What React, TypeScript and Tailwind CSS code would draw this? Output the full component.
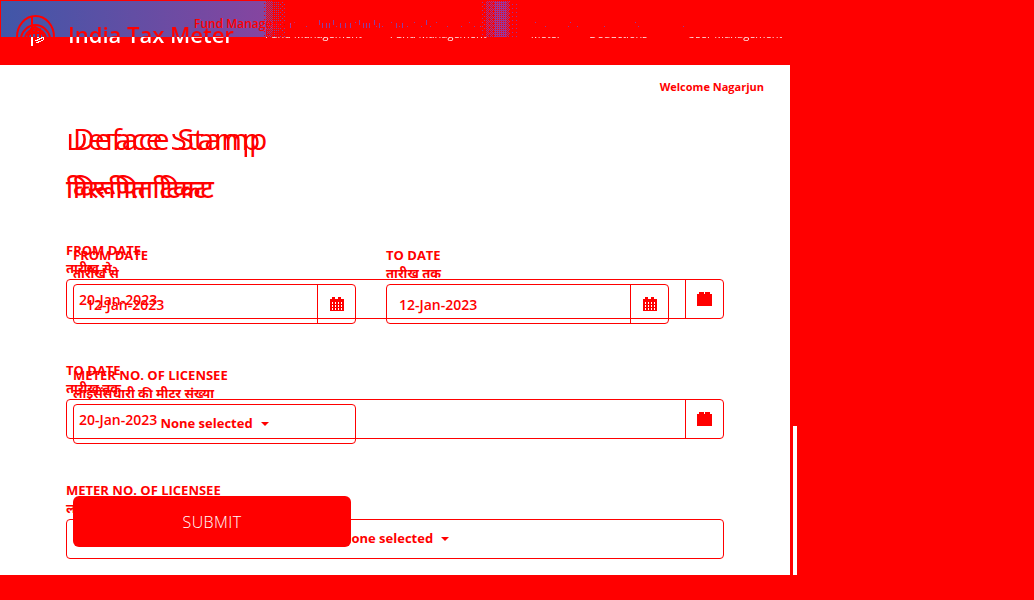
import React, { useId } from "react";

const clipText = "bg-clip-text text-transparent";
const waterline = "bg-[linear-gradient(#ff0000_37px,#ffffff_37px)] " + clipText;

const BAYER = [
  [0, 8, 2, 10],
  [12, 4, 14, 6],
  [3, 11, 1, 9],
  [15, 7, 13, 5],
];

function dither(x0: number, x1: number, density: (x: number) => number) {
  let d = "";
  for (let x = x0; x < x1; x++) {
    for (let y = 1; y < 37; y++) {
      if (BAYER[y % 4][x % 4] / 16 < density(x)) d += `M${x} ${y}h1v1h-1z`;
    }
  }
  return d;
}

const bandEdge = dither(264, 285, (x) => (x < 267 ? 0.8 : x < 272 ? 0.5 : x < 280 ? 0.25 : 0.07));
const secondBand = dither(482, 518, (x) =>
  x < 486 ? 0.07 : x < 494 ? 0.42 : x < 506 ? 0.72 : x < 510 ? 0.4 : 0.05,
);

const tallMarks = [290, 319, 322, 326, 329, 333, 340, 345, 350, 359, 363, 366, 369, 374, 379, 396, 402, 426];
const smallMarks = [
  294, 306, 336, 355, 376, 382, 391, 399, 407, 414, 421, 430, 436, 447, 461, 469, 474, 480, 535, 545, 568, 570, 577,
  604, 635, 638, 683,
];
const letterMarks =
  tallMarks.map((x, i) => `M${x} ${i % 4 === 1 ? 20 : 23}h1v5h-1z`).join("") +
  smallMarks.map((x, i) => `M${x} ${i % 3 === 0 ? 22 : 26}h1v1h-1z`).join("");

function CalendarIcon({ solid = false }: { solid?: boolean }) {
  return (
    <svg viewBox="0 0 16 16" className="h-4 w-4" shapeRendering="crispEdges" aria-hidden="true">
      <path fill="#ff0000" d={solid ? "M0 3h2V1h5v2h1V1h5v2h2v12H0z" : "M1 3h2V1h3v2h3V1h3v2h3v12H1z"} />
      {!solid && (
        <path
          fill="#fff"
          d="M3 6h1v2H3zM6 6h1v2H6zM9 6h1v2H9zM12 6h1v2h-1zM3 9h1v2H3zM6 9h1v2H6zM9 9h1v2H9zM12 9h1v2h-1zM3 12h1v2H3zM6 12h1v2H6zM9 12h1v2H9zM12 12h1v2h-1z"
        />
      )}
    </svg>
  );
}

function Label({ id, en, hi }: { id: string; en: string; hi: string }) {
  return (
    <label htmlFor={id} className="block h-[38px] text-[13px] leading-[18px] font-bold whitespace-nowrap">
      <span className="block">{en}</span>
      <span className="block">{hi}</span>
    </label>
  );
}

function DateField({ en, hi, value, wide = false }: { en: string; hi: string; value: string; wide?: boolean }) {
  const id = useId();
  return (
    <div className="h-[120px]">
      <Label id={id} en={en} hi={hi} />
      <div className="flex h-10 rounded border border-[#ff0000]">
        <input
          id={id}
          defaultValue={value}
          className="min-w-0 flex-1 bg-transparent pt-0.5 pl-3 text-sm font-semibold outline-none"
        />
        <button
          type="button"
          aria-label="Open calendar"
          className="flex w-[38px] items-center justify-center border-l border-[#ff0000]"
        >
          <CalendarIcon solid={wide} />
        </button>
      </div>
    </div>
  );
}

function MeterField() {
  const id = useId();
  return (
    <div className="h-[120px]">
      <Label id={id} en="METER NO. OF LICENSEE" hi="लाइसेंसधारी की मीटर संख्या" />
      <button
        id={id}
        type="button"
        className="flex h-10 w-full items-center justify-center gap-2 rounded border border-[#ff0000] text-[13px] font-bold"
      >
        None selected
        <svg viewBox="0 0 8 4" className="h-1 w-2" aria-hidden="true">
          <path d="M0 0h8L4 4z" fill="#ff0000" />
        </svg>
      </button>
    </div>
  );
}

function Emblem() {
  return (
    <svg viewBox="0 0 40 40" className="h-10 w-10 shrink-0" aria-hidden="true">
      <g fill="none" stroke="#ff0000" strokeWidth="2">
        <path d="M1 23a18.500 21 0 0 1 37 0" />
        <path d="M5 23a15 16 0 0 1 29 0" />
        <path d="M9 23a11 11 0 0 1 21 0" />
        <path d="M12 23l3-8 4-2 5 3 4 7M16 2v21M13 19h13M20 23v-8M24 23v-7M11 21l14-6" />
      </g>
      <path
        d="M15 23h2v9h-2zM21 23h2v1h-2zM25 23h3v1h-2v1h-2v1h-2v1h-3v-1h2v-1h2v-1h2zM27 24h1v2h-1v1h-2v1h-2v1h-3v-1h2v-1h3v-1h2z"
        fill="#fff"
        shapeRendering="crispEdges"
      />
    </svg>
  );
}

export default function App() {
  return (
    <div className="min-h-screen overflow-hidden bg-[#ff0000] font-['Open_Sans','Noto_Sans',sans-serif] text-[#ff0000]">
      <header className="relative h-[65px]">
        <svg className="absolute top-0 left-0 h-10 w-full" shapeRendering="crispEdges" aria-hidden="true">
          <defs>
            <linearGradient id="sky">
              <stop offset="0" stopColor="#4057a8" />
              <stop offset="1" stopColor="#8545a0" />
            </linearGradient>
          </defs>
          <rect x="1" y="1" width="263" height="36" fill="url(#sky)" />
          <path d={bandEdge} fill="#8545a0" />
          <path d={secondBand} fill="#9a369c" />
          <path d={letterMarks} fill="#8e3fa0" />
        </svg>
        <div className="relative flex h-[65px] pl-4">
          <div className="pt-[14px]">
            <Emblem />
          </div>
          <p className={"ml-3 pt-[18px] text-[22px] leading-8 font-semibold whitespace-nowrap " + waterline}>
            India Tax Meter
          </p>
        </div>
        <a href="#funds" className="absolute top-[15px] left-[194px] text-xs leading-[18px] font-semibold whitespace-nowrap">
          Fund Management
        </a>
        <nav
          className={
            "absolute top-0 left-[265px] flex h-[65px] gap-7 pt-[25px] text-[11px] leading-[18px] whitespace-nowrap " +
            waterline
          }
        >
          <a href="#fund">Fund Management</a>
          <a href="#meter">Fund Management</a>
          <a href="#reports" className="ml-4">Meter</a>
          <a href="#deduction" className="mr-3">Deductions</a>
          <a href="#users">User Management</a>
        </nav>
      </header>
      <div className="flex">
        <main className="relative h-[510px] min-w-0 max-w-[790px] flex-1 overflow-hidden bg-white">
          <p className="absolute top-[13px] right-[26px] text-[11px] leading-[18px] font-bold">Welcome Nagarjun</p>
          <div className="grid pt-[54px]">
            <form className="col-start-1 row-start-1 pr-[66px] pl-[66px]">
              <h1
                className={
                  "h-10 text-[30px] leading-10 font-medium bg-[linear-gradient(transparent_15px,#ff0000_15px)] " + clipText
                }
              >
                Deface Stamp
              </h1>
              <h2 className="mt-[9px] mb-[33px] h-10 text-[26px] leading-10 font-medium">विरूपित टिकट</h2>
              <DateField en="FROM DATE" hi="तारीख से" value="20-Jan-2023" wide />
              <DateField en="TO DATE" hi="तारीख तक" value="20-Jan-2023" wide />
              <MeterField />
            </form>
            <form className="relative col-start-1 row-start-1 pr-[66px] pl-[73px]">
              <h1 className="h-10 text-[30px] leading-10 font-medium">Deface Stamp</h1>
              <h2 className="mt-[9px] mb-[38px] h-10 text-[26px] leading-10 font-medium">विरूपित टिकट</h2>
              <div className="mb-[10px] grid grid-cols-[283px_283px] gap-x-[30px]">
                <DateField en="FROM DATE" hi="तारीख से" value="12-Jan-2023" />
                <DateField en="TO DATE" hi="तारीख तक" value="12-Jan-2023" />
                <MeterField />
              </div>
              <button
                type="button"
                className="block h-[51px] w-[278px] rounded-md bg-[#ff0000] text-base font-light tracking-wide text-white"
              >
                SUBMIT
              </button>
            </form>
          </div>
        </main>
        <div className="ml-[3px] h-[149px] w-1 self-end bg-white" />
      </div>
    </div>
  );
}
